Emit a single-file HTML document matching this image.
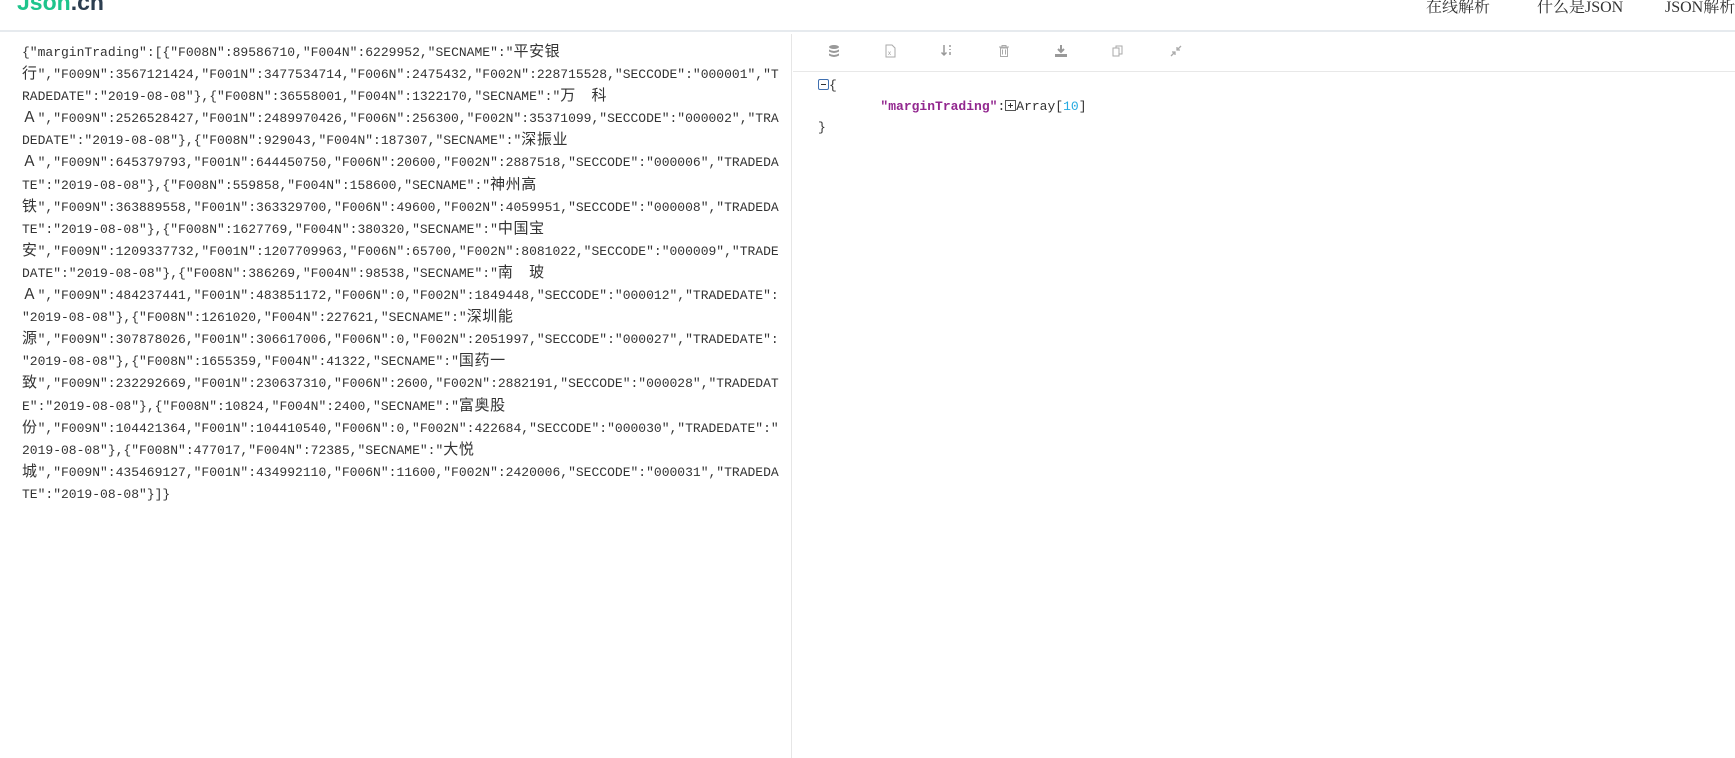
<!DOCTYPE html>
<html><head><meta charset="utf-8">
<style>
*{margin:0;padding:0;box-sizing:border-box}
html,body{width:1735px;height:758px;overflow:hidden;background:#fff}
body{position:relative;font-family:"Liberation Mono","Noto Sans CJK SC",monospace;color:#333}
.hdr{position:absolute;left:0;top:0;width:1735px;height:32px;border-bottom:2px solid #e6eaee;overflow:hidden}
.logo{position:absolute;left:17px;top:-11px;font:bold 23px "Liberation Sans",sans-serif;color:#1ec48c}
.logo b{color:#2c3e50}
.nav{position:absolute;top:-6px;font:16px "Liberation Serif","Noto Serif CJK SC",serif;color:#333;white-space:nowrap}
.left{position:absolute;left:0;top:34px;width:792px;height:724px;border-right:1px solid #e6e6e6}
.txt{position:absolute;left:22px;top:8px;font-size:13px;line-height:22.1px;white-space:pre;color:#333}
.c{font-family:"Noto Sans CJK SC",sans-serif;font-size:15px;display:inline-block;width:15.6px;line-height:10px}
.tb{position:absolute;left:793px;top:34px;width:942px;height:38px;border-bottom:1px solid #e8e8e8}
.ic{position:absolute;top:10px;width:14px;height:14px}
.tree{position:absolute;left:818px;top:75px;font-size:13px;line-height:21px;white-space:pre}
.k{color:#92278f;font-weight:bold}
.n{color:#25aae1}
.box{display:inline-block;width:11px;height:11px;border:1px solid #555;position:relative;vertical-align:-1px}
.box:before{content:"";position:absolute;left:2px;top:4px;width:5px;height:1px;background:#333}
.plus:after{content:"";position:absolute;left:4px;top:2px;width:1px;height:5px;background:#333}
.minus{border-color:#3f6fb0;border-radius:2px}
</style></head><body>
<div class="hdr">
<div class="logo">Json<b>.cn</b></div>
<div class="nav" style="left:1426px">在线解析</div>
<div class="nav" style="left:1537px">什么是JSON</div>
<div class="nav" style="left:1665px">JSON解析代码</div>
</div>
<div class="left"><div class="txt">{"marginTrading":[{"F008N":89586710,"F004N":6229952,"SECNAME":"<span class="c">平</span><span class="c">安</span><span class="c">银</span>
<span class="c">行</span>","F009N":3567121424,"F001N":3477534714,"F006N":2475432,"F002N":228715528,"SECCODE":"000001","T
RADEDATE":"2019-08-08"},{"F008N":36558001,"F004N":1322170,"SECNAME":"<span class="c">万</span><span class="c">　</span><span class="c">科</span>
<span class="c">Ａ</span>","F009N":2526528427,"F001N":2489970426,"F006N":256300,"F002N":35371099,"SECCODE":"000002","TRA
DEDATE":"2019-08-08"},{"F008N":929043,"F004N":187307,"SECNAME":"<span class="c">深</span><span class="c">振</span><span class="c">业</span>
<span class="c">Ａ</span>","F009N":645379793,"F001N":644450750,"F006N":20600,"F002N":2887518,"SECCODE":"000006","TRADEDA
TE":"2019-08-08"},{"F008N":559858,"F004N":158600,"SECNAME":"<span class="c">神</span><span class="c">州</span><span class="c">高</span>
<span class="c">铁</span>","F009N":363889558,"F001N":363329700,"F006N":49600,"F002N":4059951,"SECCODE":"000008","TRADEDA
TE":"2019-08-08"},{"F008N":1627769,"F004N":380320,"SECNAME":"<span class="c">中</span><span class="c">国</span><span class="c">宝</span>
<span class="c">安</span>","F009N":1209337732,"F001N":1207709963,"F006N":65700,"F002N":8081022,"SECCODE":"000009","TRADE
DATE":"2019-08-08"},{"F008N":386269,"F004N":98538,"SECNAME":"<span class="c">南</span><span class="c">　</span><span class="c">玻</span>
<span class="c">Ａ</span>","F009N":484237441,"F001N":483851172,"F006N":0,"F002N":1849448,"SECCODE":"000012","TRADEDATE":
"2019-08-08"},{"F008N":1261020,"F004N":227621,"SECNAME":"<span class="c">深</span><span class="c">圳</span><span class="c">能</span>
<span class="c">源</span>","F009N":307878026,"F001N":306617006,"F006N":0,"F002N":2051997,"SECCODE":"000027","TRADEDATE":
"2019-08-08"},{"F008N":1655359,"F004N":41322,"SECNAME":"<span class="c">国</span><span class="c">药</span><span class="c">一</span>
<span class="c">致</span>","F009N":232292669,"F001N":230637310,"F006N":2600,"F002N":2882191,"SECCODE":"000028","TRADEDAT
E":"2019-08-08"},{"F008N":10824,"F004N":2400,"SECNAME":"<span class="c">富</span><span class="c">奥</span><span class="c">股</span>
<span class="c">份</span>","F009N":104421364,"F001N":104410540,"F006N":0,"F002N":422684,"SECCODE":"000030","TRADEDATE":"
2019-08-08"},{"F008N":477017,"F004N":72385,"SECNAME":"<span class="c">大</span><span class="c">悦</span>
<span class="c">城</span>","F009N":435469127,"F001N":434992110,"F006N":11600,"F002N":2420006,"SECCODE":"000031","TRADEDA
TE":"2019-08-08"}]}</div></div>
<div class="tb">
<svg class="ic" style="left:34px" viewBox="0 0 14 14"><g fill="#999"><ellipse cx="7" cy="3" rx="5" ry="2"/><path d="M2 5.5q5 3 10 0v2q-5 3-10 0z"/><path d="M2 9.5q5 3 10 0v2q-5 3-10 0z"/></g></svg>
<svg class="ic" style="left:90px" viewBox="0 0 14 14"><path d="M3 1h6l3 3v9H3z" fill="none" stroke="#aaa"/><text x="5" y="11" font-size="6" fill="#999" font-family="Liberation Sans">x</text></svg>
<svg class="ic" style="left:147px" viewBox="0 0 14 14"><path d="M4 1v10M1.5 8.5L4 11l2.5-2.5M10 1v2M10 5v1M10 8v3" stroke="#999" stroke-width="1.5" fill="none"/></svg>
<svg class="ic" style="left:204px" viewBox="0 0 14 14"><path d="M2 3h10M5 3V1.5h4V3M3.5 4h7v8.5h-7z" stroke="#aaa" fill="none"/><path d="M5.5 5.5v5M8.5 5.5v5" stroke="#aaa"/></svg>
<svg class="ic" style="left:261px" viewBox="0 0 14 14"><path d="M7 1v7M4 5l3 3 3-3" stroke="#999" stroke-width="2" fill="none"/><rect x="1" y="10" width="12" height="3" fill="#999"/></svg>
<svg class="ic" style="left:318px" viewBox="0 0 14 14"><path d="M2 4h6v8H2zM5 4V2h6v8H8" stroke="#aaa" fill="none"/></svg>
<svg class="ic" style="left:376px" viewBox="0 0 14 14"><path d="M12 2L8 6M2 12l4-4M8 3v3h3M3 8h3v3" stroke="#aaa" stroke-width="1.3" fill="none"/></svg>
</div>
<div class="tree"><span class="box minus"></span>{
        <span class="k">"marginTrading"</span>:<span class="box plus"></span>Array[<span class="n">10</span>]
}</div>
</body></html>
